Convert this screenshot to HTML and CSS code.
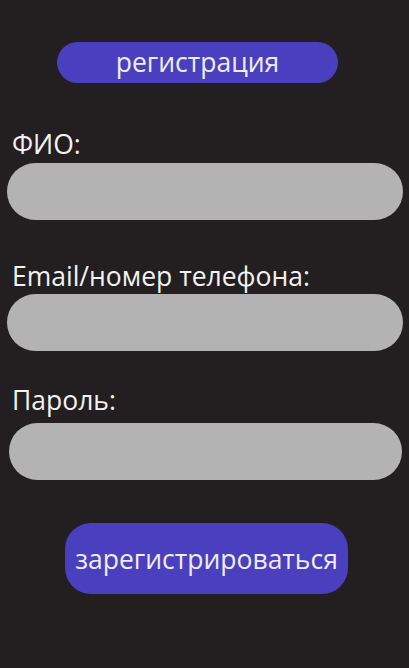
FILE: index.html
```html
<!DOCTYPE html>
<html lang="ru">
<head>
<meta charset="utf-8">
<link rel="stylesheet" href="styles.css">
</head>
<body>
<main class="page">
  <div class="title-row"><div class="title">регистрация</div></div>
  <label class="label label-fio">ФИО:</label>
  <div class="field field-fio"></div>
  <label class="label label-email">Email/номер телефона:</label>
  <div class="field field-email"></div>
  <label class="label label-pass">Пароль:</label>
  <div class="field field-pass"></div>
  <div class="submit-row"><button class="submit">зарегистрироваться</button></div>
</main>
</body>
</html>
```
FILE: styles.css
```css
* { box-sizing: border-box; }
html, body { margin: 0; padding: 0; }
body {
  background: #231f20;
  width: 409px;
  height: 668px;
  overflow: hidden;
  font-family: "Open Sans", "Noto Sans", sans-serif;
  color: #f2f2f2;
}
.page {
  display: flex;
  flex-direction: column;
  padding-top: 42px;
}
.title-row {
  padding-left: 57px;
}
.title {
  width: 281px;
  height: 41px;
  border-radius: 21px;
  background: #4a3fbe;
  font-size: 26.5px;
  line-height: 40px;
  text-align: center;
  color: #eeeeee;
}
.label {
  display: block;
  padding-left: 12px;
  font-size: 26.5px;
  line-height: 32px;
  color: #f2f2f2;
}
.label-fio { margin-top: 45px; margin-bottom: 3px; }
.label-email { margin-top: 40px; margin-bottom: 2px; }
.label-pass { margin-top: 33px; margin-bottom: 7px; }
.field {
  height: 57px;
  border-radius: 29px;
  background: #b3b3b3;
  margin-left: 7px;
  margin-right: 6px;
}
.field-pass { margin-left: 9px; margin-right: 7px; }
.submit-row {
  padding-left: 65px;
  margin-top: 43px;
}
.submit {
  width: 283px;
  height: 71px;
  border: none;
  border-radius: 26px;
  background: #4a3fbe;
  color: #eeeeee;
  font-family: "Open Sans", "Noto Sans", sans-serif;
  font-size: 26.5px;
  padding: 0;
}
```
